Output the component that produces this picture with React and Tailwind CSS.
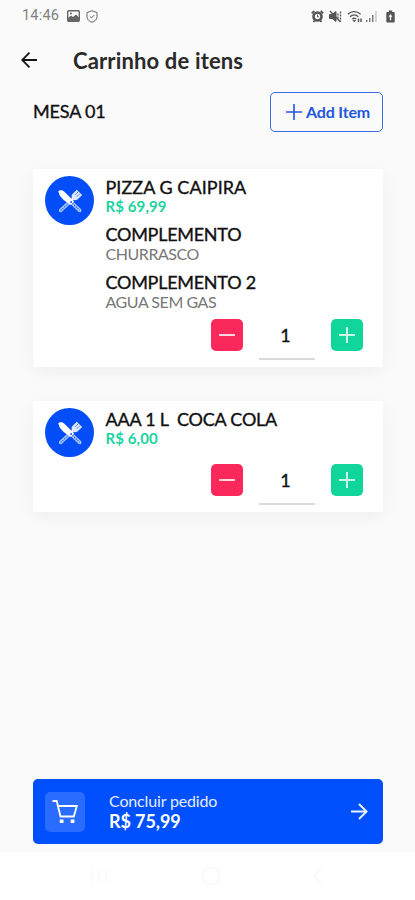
import { useState } from 'react';

const items = [
  {
    id: 1,
    name: 'PIZZA G CAIPIRA',
    price: 'R$ 69,99',
    nameClass: 'tracking-[0.05px]',
    extras: [
      { title: 'COMPLEMENTO', value: 'CHURRASCO' },
      { title: 'COMPLEMENTO 2', value: 'AGUA SEM GAS' },
    ],
  },
  { id: 2, name: 'AAA 1 L  COCA COLA', price: 'R$ 6,00', nameClass: 'tracking-[-0.22px]', extras: [] },
];

const StatusBar = () => (
  <div className="flex h-8 items-center justify-between pl-[22px] pr-[20px] text-[#666]">
    <div className="flex items-center">
      <span className="w-[38px] whitespace-nowrap font-[Roboto] text-[14.5px] leading-none tracking-[0.2px] text-[#808080]">14:46</span>
      <svg className="ml-[7px]" width="13" height="12" viewBox="0 0 13 12">
        <rect x="0.7" y="0.7" width="11.6" height="10.6" rx="1" fill="none" stroke="currentColor" strokeWidth="1.4" />
        <path d="M1 11V8l3-2.500 2 1.500 3-2.500 3 3V11z" fill="currentColor" />
        <circle cx="4" cy="3.500" r="1" fill="currentColor" />
      </svg>
      <svg className="ml-[6px]" width="12" height="13" viewBox="0 0 12 13" fill="none" stroke="currentColor">
        <path d="M6 .7 11 2.600v4.200c0 2.500-2 4.500-5 5.500-3-1-5-3-5-5.500V2.600z" />
        <path d="m3.800 6.300 1.700 1.600 3-3" />
      </svg>
    </div>
    <div className="flex items-center text-[#555]">
      <svg width="13" height="13" viewBox="0 0 13 13" fill="none" stroke="currentColor">
        <circle cx="6.500" cy="6.500" r="4" strokeWidth="2.600" />
        <path d="M.8 3.300 3.300.9M9.700.9l2.500 2.400M2.500 12l1.200-1.500M10.500 12l-1.200-1.500" strokeWidth="1.800" />
        <path d="M6.500 4.500v2.300H8" />
      </svg>
      <svg className="ml-[5px]" width="13" height="13" viewBox="0 0 13 13" fill="none" stroke="currentColor">
        <path d="M.5 4.500h2.700L7 1.500v10L3.200 8.500H.5z" fill="currentColor" />
        <path d="m1 1 10.500 11" strokeWidth="1.400" />
        <path d="M9 3.500v5.500M11.500 1.500v10" strokeDasharray="2 1" strokeWidth="1.300" />
      </svg>
      <svg className="ml-[5px]" width="16" height="13" viewBox="0 0 16 13" fill="none" stroke="currentColor">
        <path d="M.8 4.200c3.800-3.500 9-3.500 12.800 0M3 6.700c2.500-2.300 6-2.300 8.400 0M5.200 9c1.200-1 2.700-1 4 0" strokeWidth="1.300" />
        <path d="m6 10.300 1.200 1.400 1.200-1.400z" fill="currentColor" />
        <path d="M11.500 12V8.500M14 8.500V12" strokeWidth="1.500" />
      </svg>
      <svg className="ml-[3px]" width="12" height="12" viewBox="0 0 12 12" fill="currentColor">
        <path d="M0 10h1.500v2H0zM3 8h1.500v4H3zM6 5h1.500v7H6z" opacity=".75" />
        <path d="M9 1h1.800v11H9z" opacity=".25" />
      </svg>
      <svg className="ml-[8px]" width="9" height="13" viewBox="0 0 9 13">
        <path d="M2.800.5h3.400V2h1.600c.5 0 .9.400.9.900v8.700c0 .5-.4.900-.9.900H1.200a.9.900 0 0 1-.9-.9V2.900c0-.5.4-.9.9-.9h1.600z" fill="currentColor" />
        <path d="M4.500 4 2.600 6.700h1.200v3.500h1.400V6.700h1.200z" fill="#fafafa" />
      </svg>
    </div>
  </div>
);

// Crossed knife and fork inside the blue circle
const ItemIcon = () => (
  <div className="flex size-[49px] shrink-0 items-center justify-center rounded-full bg-[#034ef8]">
    <svg width="26" height="26" viewBox="0 0 26 26" fill="none">
      <path d="m11.300 15.200-7.600 7.200" stroke="#a9c4ff" strokeWidth="3.600" strokeLinecap="round" />
      <path d="m11.300 15.200-7.600 7.200" stroke="#2463ee" strokeWidth="1.200" strokeDasharray="1.300 1" />
      <path d="m11.500 15 5.200-5" stroke="#fff" strokeWidth="2.400" />
      <path d="M15 6.500 19.800 1.700l5.400 5.300-4.800 4.600c-1.500 1-3.500.8-4.600-.3-1.200-1.200-1.600-3.200-.8-4.800z" fill="#dfe9ff" />
      <path d="m17.800 7.200 3.600-3.600M19.600 9l3.700-3.700" stroke="#2463ee" strokeWidth=".7" />
      <path d="m15.500 15.500 7.200 6.900" stroke="#034ef8" strokeWidth="4.600" />
      <path d="m15.500 15.500 7.200 6.900" stroke="#a9c4ff" strokeWidth="3.600" strokeLinecap="round" />
      <path d="m15.500 15.500 7.200 6.900" stroke="#2463ee" strokeWidth="1.200" strokeDasharray="1.300 1" />
      <path d="M1.300 3c1.900-1.300 4.300-1 5.800.5l10 9.700-3.700 3.700C8 13 2.200 9.700 1.300 3z" fill="#fff" />
      <circle cx="14.200" cy="14" r=".9" fill="#034ef8" />
    </svg>
  </div>
);

const CartItem = ({ item }) => {
  const [amount, setAmount] = useState(1);

  return (
    <div className="bg-white pl-3 pr-5 pb-[7px] pt-[7px] shadow-[0_4px_16px_rgba(0,0,0,0.05)]">
      <div className="flex gap-[11.500px]">
        <ItemIcon />
        <div className="pt-[1px]">
          <h2 className={`whitespace-pre text-[18px] leading-5 text-[#111] [-webkit-text-stroke:0.35px] ${item.nameClass}`}>
            {item.name}
          </h2>
          <p className="text-[15px] font-bold leading-[19px] tracking-[0.1px] text-[#20d3a0]">{item.price}</p>
          {item.extras.map((extra) => (
            <div key={extra.title} className="mt-[8px]">
              <h3 className="text-[18px] leading-5 tracking-[-0.26px] text-[#111] [-webkit-text-stroke:0.35px]">{extra.title}</h3>
              <p className="text-[16px] leading-[19.500px] tracking-[-0.45px] text-[#777]">{extra.value}</p>
            </div>
          ))}
        </div>
      </div>
      <div className={`flex items-start justify-end gap-4 ${item.extras.length ? 'mt-2' : 'mt-[7px]'}`}>
        <button
          aria-label="Remover"
          className="flex size-8 items-center justify-center rounded-[5px] bg-[#fa285b]"
          onClick={() => setAmount(Math.max(0, amount - 1))}
        >
          <svg width="16" height="16" viewBox="0 0 16 16">
            <path d="M0 8h16" stroke="#ffd5e0" strokeWidth="2" />
          </svg>
        </button>
        <div className="flex h-[41px] w-[56px] justify-center border-b-2 border-[#dadada] pr-[3px] text-[18px] leading-8 text-[#111] [-webkit-text-stroke:0.35px]">
          {amount}
        </div>
        <button
          aria-label="Adicionar"
          className="flex size-8 items-center justify-center rounded-[5px] bg-[#11d69b]"
          onClick={() => setAmount(amount + 1)}
        >
          <svg width="16" height="16" viewBox="0 0 16 16">
            <path d="M0 8h16M8 0v16" stroke="#c9f8e9" strokeWidth="2" />
          </svg>
        </button>
      </div>
    </div>
  );
};

const App = () => {
  return (
    <div className="flex h-[900px] w-[415px] flex-col overflow-hidden bg-[#fafafa] font-[Lato,sans-serif]">
      <StatusBar />
      <header className="flex h-14 items-center pl-[21px]">
        <svg width="16" height="16" viewBox="0 0 16 16" fill="none" stroke="#161616" strokeWidth="1.800">
          <path d="M16 8H1.300M8.500.700 1.200 8l7.300 7.300" />
        </svg>
        <h1 className="ml-9 pt-px text-[22px] font-bold leading-7 tracking-[0.15px] text-[#2a2a2a]">Carrinho de itens</h1>
      </header>

      <div className="mt-1 flex items-center justify-between pl-[33px] pr-8">
        <span className="pb-px text-[18px] tracking-[-0.15px] text-[#111] [-webkit-text-stroke:0.35px]">MESA 01</span>
        <button className="flex h-10 w-[113px] items-center justify-center gap-1 rounded-[5px] border border-[#376cea] pl-[3px] text-[#2457d9]">
          <svg width="16" height="16" viewBox="0 0 16 16">
            <path d="M0 8h16M8 0v16" stroke="currentColor" strokeWidth="1.600" />
          </svg>
          <span className="text-[16px] font-bold tracking-[-0.15px]">Add Item</span>
        </button>
      </div>

      <main className="mt-[37px] flex flex-1 flex-col gap-[34px] pl-[33px] pr-8">
        {items.map((item) => (
          <CartItem key={item.id} item={item} />
        ))}
      </main>

      <footer className="pl-[33px] pr-8">
        <button className="mb-2 flex h-[65px] w-full items-center rounded-[5px] bg-[#0050ff] pl-3 pr-[15px] text-left text-white">
          <span className="flex size-10 items-center justify-center rounded-[5px] bg-[#2a6cff]">
            <svg width="26" height="26" viewBox="0 0 26 26" fill="none" stroke="#fff" strokeWidth="1.800">
              <path d="M.5 2h4.200l3.800 15.500h13.300L24.800 7H6" />
              <path d="M7.800 20.500h3.700V24H7.800zM18.700 20.500h3.700V24h-3.700z" fill="#fff" stroke="none" />
            </svg>
          </span>
          <span className="ml-6 flex-1 pb-0.5">
            <span className="block text-[16px] leading-5 tracking-[-0.15px] text-[#e4edff]">Concluir pedido</span>
            <span className="block text-[18px] font-bold leading-5 tracking-[-0.1px]">R$ 75,99</span>
          </span>
          <svg width="17" height="17" viewBox="0 0 17 17" fill="none" stroke="#eaf1ff" strokeWidth="2">
            <path d="M0 8.500h15.500M8 1l7.500 7.500L8 16" />
          </svg>
        </button>
      </footer>

      <nav className="flex h-12 shrink-0 items-center justify-between bg-white pl-[90px] pr-[93px] text-[#fafafa]">
        <svg width="18" height="16" viewBox="0 0 18 16" fill="none" stroke="currentColor" strokeWidth="2">
          <path d="M2 1v14M9 1v14M16 1v14" />
        </svg>
        <svg width="18" height="18" viewBox="0 0 18 18" fill="none" stroke="currentColor" strokeWidth="2">
          <rect x="1" y="1" width="16" height="16" rx="5" />
        </svg>
        <svg width="9" height="16" viewBox="0 0 9 16" fill="none" stroke="currentColor" strokeWidth="2">
          <path d="M8 1 1 8l7 7" />
        </svg>
      </nav>
    </div>
  );
};

export default App;
